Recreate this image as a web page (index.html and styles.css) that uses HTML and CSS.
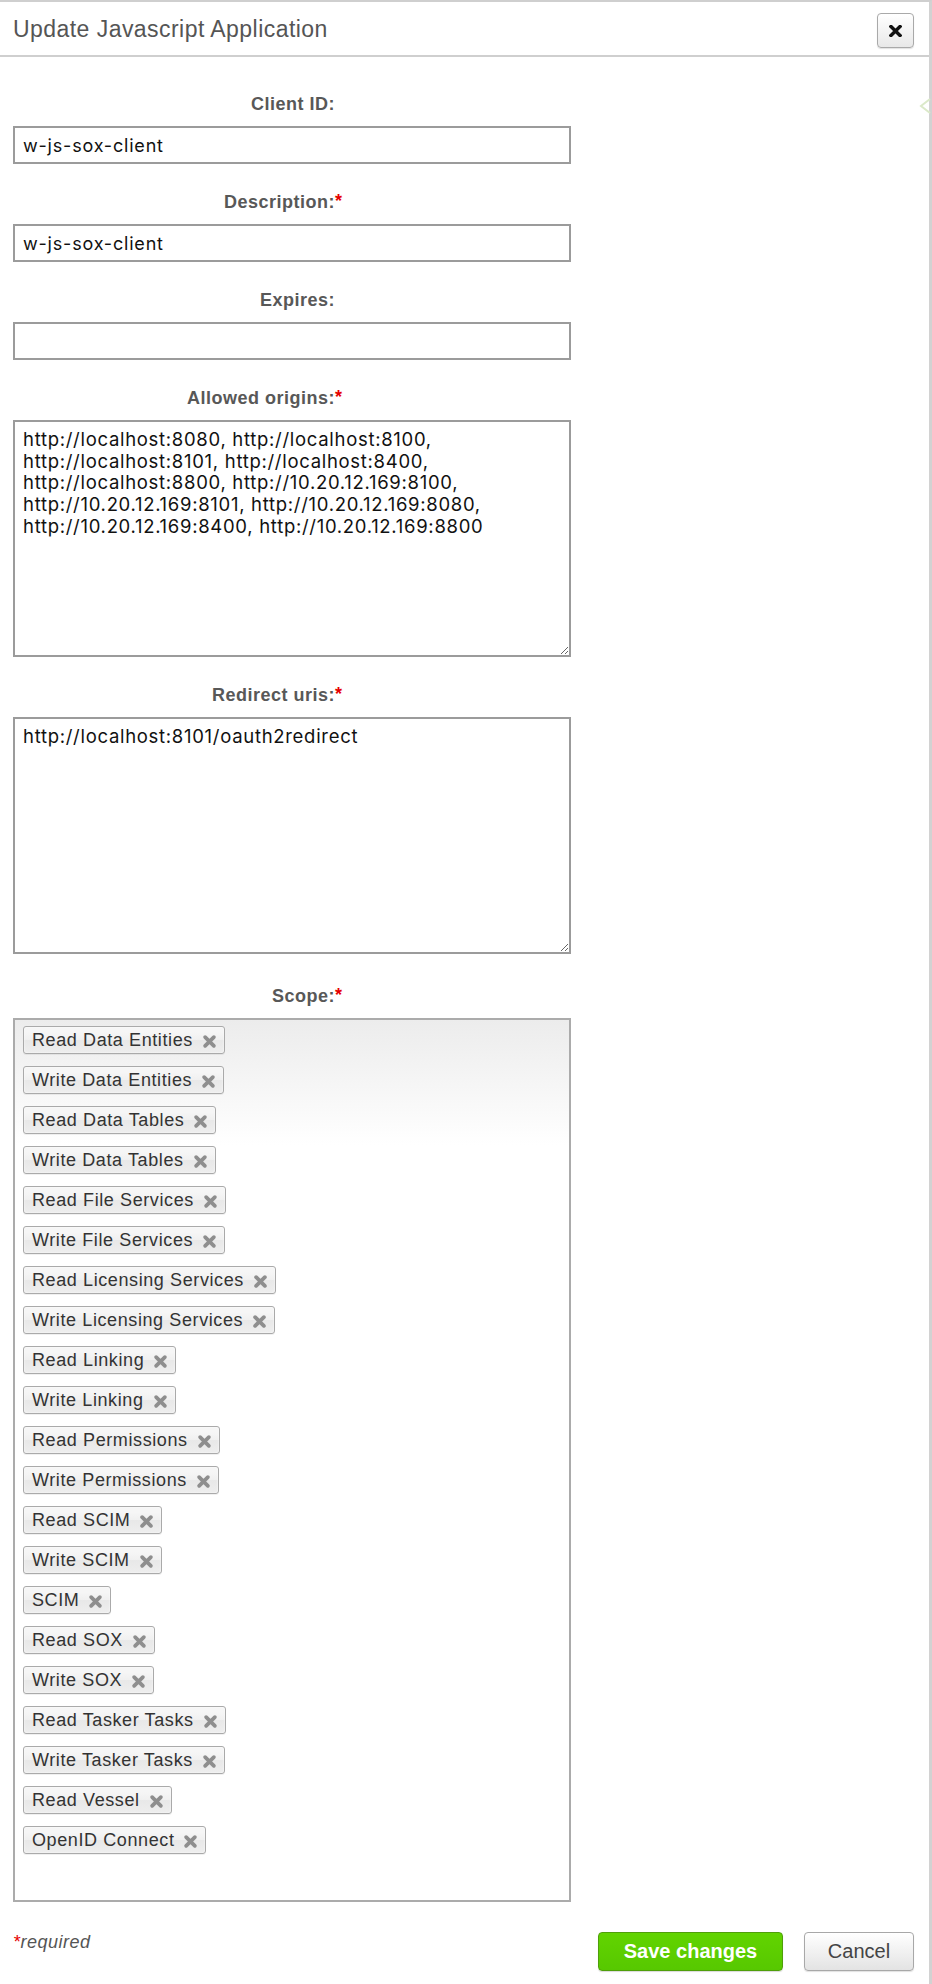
FILE: index.html
```html
<!DOCTYPE html>
<html lang="en">
<head>
<meta charset="utf-8">
<title>Update Javascript Application</title>
<link rel="stylesheet" href="styles.css">
</head>
<body>
<div class="modal">
  <div class="modal-header">
    <h3 class="modal-title">Update Javascript Application</h3>
    <button class="close-btn" type="button" aria-label="Close">
      <svg width="13" height="12" viewBox="0 0 13 12"><path d="M2 1.5 L11 10.5 M11 1.5 L2 10.5" stroke="#111" stroke-width="3.4" stroke-linecap="square"/></svg>
    </button>
  </div>
  <svg class="pointer" width="12" height="16" viewBox="0 0 12 16"><polyline points="11,1 2,8 11,15" fill="none" stroke="#dbe9c9" stroke-width="2"/></svg>

  <div class="modal-body">
    <div class="form">
      <div class="field">
        <label class="field-label"><span class="label-text">Client ID:</span></label>
        <input class="text-input" type="text" value="w-js-sox-client">
      </div>
      <div class="field">
        <label class="field-label"><span class="label-text">Description:<span class="req">*</span></span></label>
        <input class="text-input" type="text" value="w-js-sox-client">
      </div>
      <div class="field">
        <label class="field-label"><span class="label-text">Expires:</span></label>
        <input class="text-input" type="text" value="">
      </div>
      <div class="field">
        <label class="field-label"><span class="label-text">Allowed origins:<span class="req">*</span></span></label>
        <textarea class="text-area">http://localhost:8080, http://localhost:8100, http://localhost:8101, http://localhost:8400, http://localhost:8800, http://10.20.12.169:8100, http://10.20.12.169:8101, http://10.20.12.169:8080, http://10.20.12.169:8400, http://10.20.12.169:8800</textarea>
      </div>
      <div class="field">
        <label class="field-label"><span class="label-text">Redirect uris:<span class="req">*</span></span></label>
        <textarea class="text-area">http://localhost:8101/oauth2redirect</textarea>
      </div>
      <div class="field field-scope">
        <label class="field-label"><span class="label-text">Scope:<span class="req">*</span></span></label>
        <div class="scope-box">
          <span class="tag">Read Data Entities<svg class="tag-x" viewBox="0 0 12 12"><path d="M2.5 2.5 L9.5 9.5 M9.5 2.5 L2.5 9.5"/></svg></span>
          <span class="tag">Write Data Entities<svg class="tag-x" viewBox="0 0 12 12"><path d="M2.5 2.5 L9.5 9.5 M9.5 2.5 L2.5 9.5"/></svg></span>
          <span class="tag">Read Data Tables<svg class="tag-x" viewBox="0 0 12 12"><path d="M2.5 2.5 L9.5 9.5 M9.5 2.5 L2.5 9.5"/></svg></span>
          <span class="tag">Write Data Tables<svg class="tag-x" viewBox="0 0 12 12"><path d="M2.5 2.5 L9.5 9.5 M9.5 2.5 L2.5 9.5"/></svg></span>
          <span class="tag">Read File Services<svg class="tag-x" viewBox="0 0 12 12"><path d="M2.5 2.5 L9.5 9.5 M9.5 2.5 L2.5 9.5"/></svg></span>
          <span class="tag">Write File Services<svg class="tag-x" viewBox="0 0 12 12"><path d="M2.5 2.5 L9.5 9.5 M9.5 2.5 L2.5 9.5"/></svg></span>
          <span class="tag">Read Licensing Services<svg class="tag-x" viewBox="0 0 12 12"><path d="M2.5 2.5 L9.5 9.5 M9.5 2.5 L2.5 9.5"/></svg></span>
          <span class="tag">Write Licensing Services<svg class="tag-x" viewBox="0 0 12 12"><path d="M2.5 2.5 L9.5 9.5 M9.5 2.5 L2.5 9.5"/></svg></span>
          <span class="tag">Read Linking<svg class="tag-x" viewBox="0 0 12 12"><path d="M2.5 2.5 L9.5 9.5 M9.5 2.5 L2.5 9.5"/></svg></span>
          <span class="tag">Write Linking<svg class="tag-x" viewBox="0 0 12 12"><path d="M2.5 2.5 L9.5 9.5 M9.5 2.5 L2.5 9.5"/></svg></span>
          <span class="tag">Read Permissions<svg class="tag-x" viewBox="0 0 12 12"><path d="M2.5 2.5 L9.5 9.5 M9.5 2.5 L2.5 9.5"/></svg></span>
          <span class="tag">Write Permissions<svg class="tag-x" viewBox="0 0 12 12"><path d="M2.5 2.5 L9.5 9.5 M9.5 2.5 L2.5 9.5"/></svg></span>
          <span class="tag">Read SCIM<svg class="tag-x" viewBox="0 0 12 12"><path d="M2.5 2.5 L9.5 9.5 M9.5 2.5 L2.5 9.5"/></svg></span>
          <span class="tag">Write SCIM<svg class="tag-x" viewBox="0 0 12 12"><path d="M2.5 2.5 L9.5 9.5 M9.5 2.5 L2.5 9.5"/></svg></span>
          <span class="tag">SCIM<svg class="tag-x" viewBox="0 0 12 12"><path d="M2.5 2.5 L9.5 9.5 M9.5 2.5 L2.5 9.5"/></svg></span>
          <span class="tag">Read SOX<svg class="tag-x" viewBox="0 0 12 12"><path d="M2.5 2.5 L9.5 9.5 M9.5 2.5 L2.5 9.5"/></svg></span>
          <span class="tag">Write SOX<svg class="tag-x" viewBox="0 0 12 12"><path d="M2.5 2.5 L9.5 9.5 M9.5 2.5 L2.5 9.5"/></svg></span>
          <span class="tag">Read Tasker Tasks<svg class="tag-x" viewBox="0 0 12 12"><path d="M2.5 2.5 L9.5 9.5 M9.5 2.5 L2.5 9.5"/></svg></span>
          <span class="tag">Write Tasker Tasks<svg class="tag-x" viewBox="0 0 12 12"><path d="M2.5 2.5 L9.5 9.5 M9.5 2.5 L2.5 9.5"/></svg></span>
          <span class="tag">Read Vessel<svg class="tag-x" viewBox="0 0 12 12"><path d="M2.5 2.5 L9.5 9.5 M9.5 2.5 L2.5 9.5"/></svg></span>
          <span class="tag">OpenID Connect<svg class="tag-x" viewBox="0 0 12 12"><path d="M2.5 2.5 L9.5 9.5 M9.5 2.5 L2.5 9.5"/></svg></span>
        </div>
      </div>
    </div>

    <div class="modal-footer">
      <div class="required-note"><span class="req">*</span>required</div>
      <div class="actions">
        <button class="btn btn-save" type="button">Save changes</button>
        <button class="btn btn-cancel" type="button">Cancel</button>
      </div>
    </div>
  </div>
</div>
</body>
</html>
```

FILE: styles.css
```css
* { box-sizing: border-box; }

html, body {
  margin: 0;
  padding: 0;
  background: #fff;
}

body {
  font-family: "Liberation Sans", Arial, sans-serif;
  color: #333;
}

.modal {
  position: relative;
  width: 932px;
  height: 1984px;
  border-top: 2px solid #cfcfcf;
  border-right: 3px solid #d2d2d2;
  background: #fff;
}

.modal-header {
  display: flex;
  align-items: center;
  justify-content: space-between;
  height: 55px;
  padding: 0 15px 0 13px;
  border-bottom: 2px solid #cfcfcf;
}

.modal-title {
  margin: 0;
  margin-top: 1px;
  font-size: 23px;
  font-weight: normal;
  letter-spacing: 0.45px;
  color: #555;
}

.close-btn {
  display: flex;
  align-items: center;
  justify-content: center;
  width: 37px;
  height: 35px;
  margin-top: 4px;
  padding: 0;
  border: 1px solid #a9a9a9;
  border-radius: 4px;
  background: linear-gradient(#ffffff, #e8e8e8);
  box-shadow: 0 1px 1px rgba(0,0,0,0.12);
}

.pointer {
  position: absolute;
  right: -2px;
  top: 96px;
}

.modal-body {
  padding: 37px 15px 0 13px;
}

.form {
  width: 558px;
}

.field {
  display: flex;
  flex-direction: column;
  margin-bottom: 28px;
}

.field-scope {
  padding-top: 4px;
  margin-bottom: 30px;
}

.field-label {
  display: block;
  width: 322px;
  height: 20px;
  line-height: 20px;
  margin-bottom: 12px;
  text-align: right;
  font-size: 18px;
  font-weight: bold;
  letter-spacing: 0.5px;
  color: #585858;
}

.label-text {
  position: relative;
}

.label-text .req {
  position: absolute;
  left: 100%;
  top: -1px;
}

.req {
  color: #e60000;
}

.text-input {
  display: block;
  width: 558px;
  height: 38px;
  margin: 0;
  padding: 0 8px;
  border: 2px solid #9b9b9b;
  border-radius: 0;
  font-family: "Inter", "Liberation Sans", sans-serif;
  font-size: 18px;
  letter-spacing: 0.8px;
  color: #111;
  outline: none;
}

.text-area {
  display: block;
  width: 558px;
  height: 237px;
  margin: 0;
  padding: 7px 8px;
  border: 2px solid #9b9b9b;
  border-radius: 0;
  font-family: "Inter", "Liberation Sans", sans-serif;
  font-size: 18.5px;
  line-height: 21.7px;
  letter-spacing: 0.7px;
  color: #111;
  resize: both;
  outline: none;
}

.scope-box {
  display: flex;
  flex-direction: column;
  align-items: flex-start;
  gap: 12px;
  width: 558px;
  height: 884px;
  padding: 6px 8px;
  border: 2px solid #ababab;
  background: linear-gradient(to bottom, #ececec 0px, #ffffff 125px, #ffffff 100%);
}

.tag {
  display: inline-flex;
  align-items: center;
  height: 28px;
  padding: 0 7px 0 8px;
  border: 1px solid #aaa;
  border-radius: 3px;
  background: linear-gradient(#f6f6f6 20%, #f0f0f0 50%, #e8e8e8 52%, #eeeeee 100%);
  box-shadow: 0 0 2px #fff inset, 0 1px 0 rgba(0,0,0,0.06);
  font-size: 18px;
  letter-spacing: 0.6px;
  color: #333;
  white-space: nowrap;
}

.tag-x {
  display: block;
  width: 15px;
  height: 15px;
  margin-left: 9px;
  margin-top: 2px;
  fill: none;
  stroke: #8e8e8e;
  stroke-width: 3;
  stroke-linecap: round;
}

.modal-footer {
  display: flex;
  justify-content: space-between;
  align-items: flex-start;
}

.required-note {
  font-size: 18px;
  font-style: italic;
  letter-spacing: 0.5px;
  color: #555;
}

.actions {
  display: flex;
  gap: 21px;
}

.btn {
  height: 39px;
  margin: 0;
  border-radius: 4px;
  font-family: "Liberation Sans", Arial, sans-serif;
  cursor: pointer;
}

.btn-save {
  width: 185px;
  border: 1px solid #4f9f0a;
  background: linear-gradient(#62d400, #57c800);
  box-shadow: 0 1px 1px rgba(0,0,0,0.15);
  color: #fff;
  font-size: 20px;
  font-weight: bold;
}

.btn-cancel {
  width: 110px;
  border: 1px solid #a8a8a8;
  background: linear-gradient(#ffffff, #e3e3e3);
  box-shadow: 0 1px 1px rgba(0,0,0,0.12);
  color: #444;
  font-size: 20px;
}
```
